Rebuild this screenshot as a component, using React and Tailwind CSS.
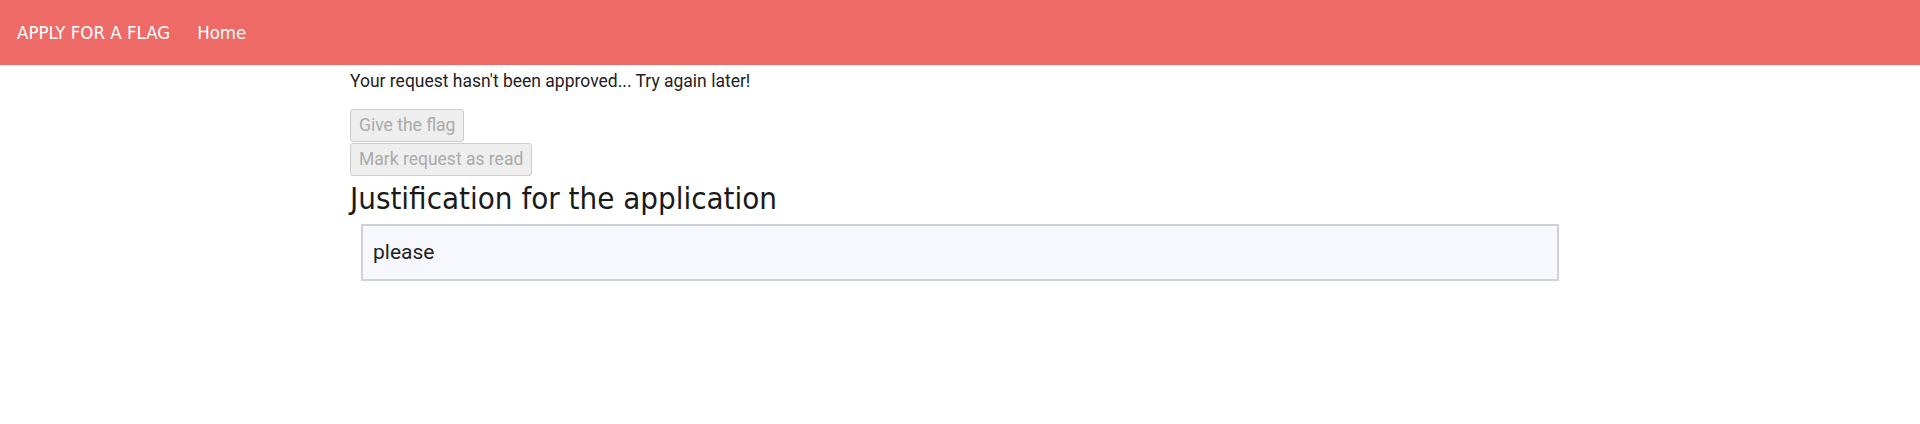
import React from "react";

const cond = { fontFamily: '"DejaVu Sans", sans-serif', fontStretch: "condensed" };

export default function App() {
  return (
    <div className="min-h-[424px] bg-white font-['Roboto',sans-serif] text-[#222]">
      {/* Navbar */}
      <nav className="h-[65px] bg-[#ee6a67] flex items-center px-[17px] gap-[27px] text-white">
        <span style={cond} className="text-[18.5px]">APPLY FOR A FLAG</span>
        <span style={cond} className="text-[18.5px]">Home</span>
      </nav>

      <div className="w-[1220px] mx-auto">
        <p className="text-[17.5px] leading-[24px] mt-[4px]">
          Your request hasn't been approved... Try again later!
        </p>

        <div className="mt-[16px] flex flex-col items-start gap-[1px]">
          <button
            disabled
            className="h-[33px] px-[8px] text-[17.5px] text-[#aaa] bg-[#eee] border border-[#ccc] rounded-[3px]"
          >
            Give the flag
          </button>
          <button
            disabled
            className="h-[33px] px-[8px] text-[17.5px] text-[#aaa] bg-[#eee] border border-[#ccc] rounded-[3px]"
          >
            Mark request as read
          </button>
        </div>

        <h1 style={cond} className="text-[31px] leading-[44px] text-[#1a1a1a]">
          Justification for the application
        </h1>

        <div className="mx-[11px] mt-[4px] h-[57px] bg-[#f7f8fd] border-2 border-[#d0d0d5] flex items-center px-[10px]">
          <span className="text-[21px]">please</span>
        </div>
      </div>
    </div>
  );
}
